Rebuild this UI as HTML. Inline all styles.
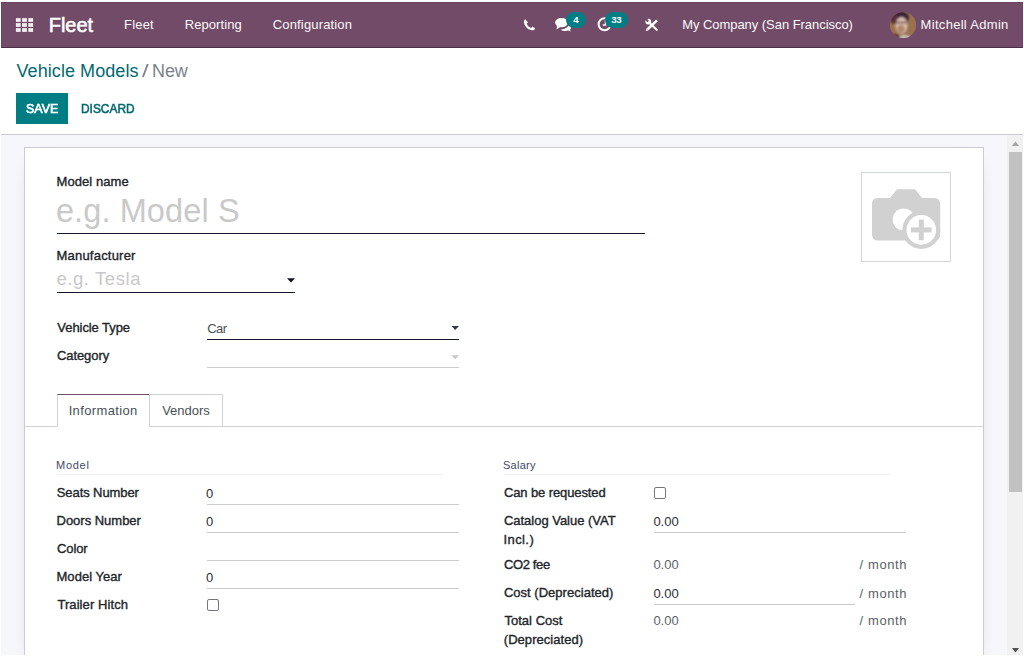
<!DOCTYPE html>
<html lang="en">
<head>
<meta charset="utf-8">
<title>Odoo - Vehicle Models / New</title>
<style>
html,body{margin:0;padding:0;}
body{width:1024px;height:656px;overflow:hidden;background:#fff;position:relative;font-family:"Liberation Sans",sans-serif;}
.abs{position:absolute;}
.t{position:absolute;white-space:nowrap;display:block;}
#nav{left:1px;top:2px;width:1022px;height:46px;background:#714b67;box-sizing:border-box;border-top:1px solid #69435f;border-left:1px solid #69435f;border-right:1px solid #69435f;border-bottom:1px solid #4f2f48;}
#cpline{left:1px;top:134px;width:1022px;height:1px;background:#c9ccd4;}
#bg{left:1px;top:135px;width:1006px;height:520px;background:#f6f7fa;}
#sheet{left:24px;top:147px;width:960px;height:520px;box-sizing:border-box;border:1px solid #c9ccd4;background:#fff;box-shadow:0 5px 20px -15px rgba(0,0,0,0.45);}
#sb{left:1007px;top:135px;width:16px;height:520px;background:#f1f1f1;}
#thumb{left:1009px;top:152px;width:13px;height:340px;background:#c1c1c1;}
#savebtn{left:16px;top:93px;width:52px;height:31px;background:#017e84;}
.ln{position:absolute;height:1px;}
.dk{background:#121629;}
.lt{background:#cccccc;}
.vl{background:#f0f0f0;}
.cb{position:absolute;width:12px;height:12px;box-sizing:border-box;border:1px solid #757588;border-radius:2px;background:#fff;}
.badge{position:absolute;height:16px;border-radius:8px;background:#017e84;}
</style>
</head>
<body>
<div class="abs" id="nav"></div>
<div class="abs" id="cpline"></div>
<div class="abs" id="bg"></div>
<div class="abs" id="sb"></div>
<div class="abs" id="thumb"></div>
<svg class="abs" style="left:1007px;top:135px" width="16" height="520" viewBox="0 0 16 520">
  <polygon points="4.9,11 12.1,11 8.5,6.600" fill="#a3a3a3"/>
  <polygon points="5,513 12,513 8.5,517.5" fill="#505050"/>
</svg>
<div class="abs" id="sheet"></div>
<div class="abs" id="savebtn"></div>

<!-- nav icons -->
<svg class="abs" style="left:0;top:0" width="1024" height="48" viewBox="0 0 1024 48">
  <!-- apps grid -->
  <g fill="#f1edf1">
    <rect x="15.9" y="18.100" width="4.800" height="3.800"/><rect x="22.100" y="18.100" width="4.800" height="3.800"/><rect x="28.300" y="18.100" width="4.800" height="3.800"/>
    <rect x="15.9" y="23.100" width="4.800" height="3.800"/><rect x="22.100" y="23.100" width="4.800" height="3.800"/><rect x="28.300" y="23.100" width="4.800" height="3.800"/>
    <rect x="15.9" y="28.100" width="4.800" height="3.800"/><rect x="22.100" y="28.100" width="4.800" height="3.800"/><rect x="28.300" y="28.100" width="4.800" height="3.800"/>
  </g>
  <!-- phone -->
  <path d="M525.2 19.2 C524 20 523.6 21.5 524 23 C525 27 528.5 30 532 30.2 C533.6 30.3 534.8 29.6 535.2 28.4 L532.6 26.6 L531 28 C529 27.2 527.2 25.2 526.6 23.4 L528 22.2 Z" fill="#ffffff"/>
  <!-- chat -->
  <g fill="#ffffff">
    <ellipse cx="561.5" cy="22.6" rx="6.4" ry="4.7"/>
    <polygon points="557,25.5 556.6,29.4 561,26.6"/>
    <path d="M569.2 23.5 C570.6 24.4 571.4 25.6 571.4 26.8 C571.4 28 570.8 29 569.8 29.8 L571 31.6 L568.2 30.6 C567.4 30.8 566.6 31 565.6 31 C563.6 31 561.8 30.4 560.8 29.4 C565 29.4 568.6 27 569.2 23.5 Z"/>
  </g>
  <!-- clock -->
  <circle cx="604.6" cy="24.3" r="6" fill="none" stroke="#ffffff" stroke-width="2"/>
  <path d="M605.5 20.3 V25 H602.8" fill="none" stroke="#ffffff" stroke-width="1.4"/>
  <!-- tools -->
  <g stroke="#ffffff" fill="none">
    <line x1="647.3" y1="29.5" x2="657" y2="20.3" stroke-width="2.5"/>
    <line x1="649.6" y1="22.9" x2="656.8" y2="29.8" stroke-width="2.1" stroke-linecap="round"/>
  </g>
  <polygon points="645.8,31 646.4,28.6 648.2,30.400" fill="#ffffff"/>
  <circle cx="648.3" cy="21.600" r="2.900" fill="#ffffff"/>
  <rect x="647.2" y="17.6" width="2.200" height="3.800" fill="#714b67" transform="rotate(-42 648.3 21.600)"/>
  <!-- avatar -->
  <defs><clipPath id="av"><circle cx="903" cy="25" r="13.100"/></clipPath>
  <filter id="bl" x="-20%" y="-20%" width="140%" height="140%"><feGaussianBlur stdDeviation="0.9"/></filter></defs>
  <g clip-path="url(#av)">
    <rect x="888" y="10" width="30" height="30" fill="#9a7250"/>
    <g filter="url(#bl)">
      <ellipse cx="900" cy="17.500" rx="9" ry="6.500" fill="#3d2034"/>
      <ellipse cx="894" cy="19" rx="4" ry="5" fill="#5a2e3a"/>
      <ellipse cx="901.500" cy="25.500" rx="6" ry="8.500" fill="#d6bcae"/>
      <ellipse cx="901" cy="29" rx="3.600" ry="4" fill="#b08568"/>
      <rect x="896" y="21.800" width="11" height="1.500" fill="#6a4340"/>
      <ellipse cx="905" cy="38" rx="6" ry="3" fill="#c9c4c4"/>
      <ellipse cx="895" cy="37" rx="5" ry="3" fill="#5a3a3a"/>
    </g>
  </g>
</svg>
<div class="badge" style="left:566px;top:12px;width:20px;"></div>
<div class="badge" style="left:605px;top:12px;width:23px;"></div>

<!-- form lines -->
<div class="ln dk" style="left:57px;top:233px;width:588px;"></div>
<div class="ln dk" style="left:57px;top:292px;width:238px;"></div>
<div class="ln dk" style="left:207px;top:339px;width:252px;"></div>
<div class="ln lt" style="left:207px;top:367px;width:252px;"></div>
<!-- carets -->
<svg class="abs" style="left:0;top:270px" width="1024" height="100" viewBox="0 270 1024 100">
  <polygon points="287,278.2 295,278.2 291,282.4" fill="#111425"/>
  <polygon points="451.5,326 459,326 455.2,330" fill="#343a40"/>
  <polygon points="451.3,355.2 459,355.2 455.2,359.2" fill="#c8c8c8"/>
</svg>

<!-- image placeholder -->
<div class="abs" style="left:861px;top:172px;width:90px;height:90px;box-sizing:border-box;border:1px solid #d3d6de;background:#fff;"></div>
<svg class="abs" style="left:861px;top:172px" width="90" height="90" viewBox="861 172 90 90">
  <path d="M878 198 H890 L897 189.3 H915 L922 198 H934.2 Q940.2 198 940.2 204 V234.5 Q940.2 240.5 934.2 240.5 H878 Q872 240.5 872 234.500 V204 Q872 198 878 198 Z" fill="#d1d1d1"/>
  <circle cx="903.700" cy="219.500" r="11" fill="#fff"/>
  <circle cx="921.300" cy="229.900" r="19" fill="#d1d1d1"/>
  <circle cx="921.300" cy="229.900" r="14.800" fill="#fff"/>
  <rect x="911" y="227.400" width="20.600" height="5" fill="#d1d1d1"/>
  <rect x="918.800" y="219.600" width="5" height="20.600" fill="#d1d1d1"/>
</svg>

<!-- tabs -->
<div class="ln" style="left:25px;top:426px;width:958px;background:#cfd2d8;"></div>
<div class="abs" style="left:57px;top:394px;width:93px;height:33px;box-sizing:border-box;border:1px solid #cfd2d8;border-bottom:1px solid #fff;border-top:1px solid #714b67;background:#fff;"></div>
<div class="abs" style="left:149px;top:394px;width:74px;height:33px;box-sizing:border-box;border:1px solid #cfd2d8;background:#fff;"></div>

<!-- group separators -->
<div class="ln vl" style="left:57px;top:474px;width:386px;"></div>
<div class="ln vl" style="left:504px;top:474px;width:386px;"></div>
<!-- field underlines -->
<div class="ln lt" style="left:207px;top:504px;width:252px;"></div>
<div class="ln lt" style="left:207px;top:532px;width:252px;"></div>
<div class="ln lt" style="left:207px;top:560px;width:252px;"></div>
<div class="ln lt" style="left:207px;top:588px;width:252px;"></div>
<div class="ln lt" style="left:654px;top:532px;width:252px;"></div>
<div class="ln lt" style="left:654px;top:604px;width:201px;"></div>
<!-- checkboxes -->
<div class="cb" style="left:207px;top:599px;"></div>
<div class="cb" style="left:654px;top:487px;"></div>

<span class="t" id="brand" style="left:48.80px;top:15.07px;font-size:20px;line-height:20px;color:#ffffff;letter-spacing:-0.054px;-webkit-text-stroke:0.56px #ffffff;">Fleet</span>
<span class="t" id="m1" style="left:124.07px;top:18.00px;font-size:13px;line-height:13px;color:#fbf9fb;letter-spacing:0.176px;">Fleet</span>
<span class="t" id="m2" style="left:184.71px;top:18.00px;font-size:13px;line-height:13px;color:#fbf9fb;letter-spacing:0.085px;">Reporting</span>
<span class="t" id="m3" style="left:272.74px;top:18.00px;font-size:13px;line-height:13px;color:#fbf9fb;letter-spacing:0.159px;">Configuration</span>
<span class="t" id="co" style="left:682.17px;top:18.00px;font-size:13px;line-height:13px;color:#fbf9fb;letter-spacing:-0.048px;">My Company (San Francisco)</span>
<span class="t" id="us" style="left:920.62px;top:18.00px;font-size:13px;line-height:13px;color:#fbf9fb;letter-spacing:0.298px;">Mitchell Admin</span>
<span class="t" id="b1" style="left:573.24px;top:14.75px;font-size:9.75px;line-height:9.75px;color:#ffffff;letter-spacing:0.000px;font-weight:bold;">4</span>
<span class="t" id="b2" style="left:611.35px;top:14.75px;font-size:9.75px;line-height:9.75px;color:#ffffff;letter-spacing:-0.475px;font-weight:bold;">33</span>
<span class="t" id="bc1" style="left:16.52px;top:61.96px;font-size:18px;line-height:18px;color:#016a70;letter-spacing:0.066px;">Vehicle Models</span>
<span class="t" id="bc2" style="left:142.20px;top:61.96px;font-size:18px;line-height:18px;color:#7c828c;transform-origin:0 0;transform:scaleX(1.3402);">/</span>
<span class="t" id="bc3" style="left:152.12px;top:61.96px;font-size:18px;line-height:18px;color:#7c828c;letter-spacing:-0.163px;">New</span>
<span class="t" id="save" style="left:26.26px;top:102.00px;font-size:13px;line-height:13px;color:#ffffff;transform-origin:0 0;transform:scaleX(0.9559);-webkit-text-stroke:0.70px #ffffff;">SAVE</span>
<span class="t" id="disc" style="left:80.61px;top:102.00px;font-size:13px;line-height:13px;color:#016a70;transform-origin:0 0;transform:scaleX(0.9156);-webkit-text-stroke:0.55px #016a70;">DISCARD</span>
<span class="t" id="l_mn" style="left:56.51px;top:175.00px;font-size:13px;line-height:13px;color:#212529;letter-spacing:0.069px;-webkit-text-stroke:0.36px #212529;">Model name</span>
<span class="t" id="p_mn" style="left:55.91px;top:195.09px;font-size:32.5px;line-height:32.5px;color:#c9c9c9;letter-spacing:0.109px;">e.g. Model S</span>
<span class="t" id="l_mf" style="left:56.51px;top:249.00px;font-size:13px;line-height:13px;color:#212529;letter-spacing:0.211px;-webkit-text-stroke:0.36px #212529;">Manufacturer</span>
<span class="t" id="p_mf" style="left:56.42px;top:270.24px;font-size:18.5px;line-height:18.5px;color:#c9c9c9;letter-spacing:0.575px;">e.g. Tesla</span>
<span class="t" id="l_vt" style="left:57.36px;top:321.00px;font-size:13px;line-height:13px;color:#212529;letter-spacing:-0.071px;-webkit-text-stroke:0.36px #212529;">Vehicle Type</span>
<span class="t" id="v_vt" style="left:207.30px;top:322.00px;font-size:13px;line-height:13px;color:#495057;letter-spacing:-0.582px;">Car</span>
<span class="t" id="l_cat" style="left:56.91px;top:349.00px;font-size:13px;line-height:13px;color:#212529;letter-spacing:-0.068px;-webkit-text-stroke:0.36px #212529;">Category</span>
<span class="t" id="t1" style="left:68.63px;top:404.00px;font-size:13px;line-height:13px;color:#495057;letter-spacing:0.367px;">Information</span>
<span class="t" id="t2" style="left:162.16px;top:404.00px;font-size:13px;line-height:13px;color:#495057;letter-spacing:0.000px;">Vendors</span>
<span class="t" id="s1" style="left:56.01px;top:460.19px;font-size:11px;line-height:11px;color:#434a66;letter-spacing:0.723px;">Model</span>
<span class="t" id="s2" style="left:502.96px;top:460.19px;font-size:11px;line-height:11px;color:#434a66;letter-spacing:0.259px;">Salary</span>
<span class="t" id="l1" style="left:56.74px;top:486.00px;font-size:13px;line-height:13px;color:#212529;letter-spacing:-0.080px;-webkit-text-stroke:0.36px #212529;">Seats Number</span>
<span class="t" id="l2" style="left:56.51px;top:514.00px;font-size:13px;line-height:13px;color:#212529;letter-spacing:-0.010px;-webkit-text-stroke:0.36px #212529;">Doors Number</span>
<span class="t" id="l3" style="left:56.91px;top:542.00px;font-size:13px;line-height:13px;color:#212529;letter-spacing:-0.072px;-webkit-text-stroke:0.36px #212529;">Color</span>
<span class="t" id="l4" style="left:56.51px;top:570.00px;font-size:13px;line-height:13px;color:#212529;letter-spacing:0.040px;-webkit-text-stroke:0.36px #212529;">Model Year</span>
<span class="t" id="l5" style="left:57.38px;top:598.00px;font-size:13px;line-height:13px;color:#212529;letter-spacing:0.085px;-webkit-text-stroke:0.36px #212529;">Trailer Hitch</span>
<span class="t" id="v1" style="left:205.88px;top:487.00px;font-size:13px;line-height:13px;color:#2a2e33;letter-spacing:0.000px;">0</span>
<span class="t" id="v2" style="left:205.88px;top:515.00px;font-size:13px;line-height:13px;color:#2a2e33;letter-spacing:0.000px;">0</span>
<span class="t" id="v4" style="left:205.88px;top:571.00px;font-size:13px;line-height:13px;color:#2a2e33;letter-spacing:0.000px;">0</span>
<span class="t" id="r1" style="left:503.91px;top:486.00px;font-size:13px;line-height:13px;color:#212529;letter-spacing:-0.103px;-webkit-text-stroke:0.36px #212529;">Can be requested</span>
<span class="t" id="r2" style="left:503.91px;top:514.00px;font-size:13px;line-height:13px;color:#212529;letter-spacing:-0.015px;-webkit-text-stroke:0.36px #212529;">Catalog Value (VAT</span>
<span class="t" id="r2b" style="left:503.49px;top:533.00px;font-size:13px;line-height:13px;color:#212529;letter-spacing:0.413px;-webkit-text-stroke:0.36px #212529;">Incl.)</span>
<span class="t" id="r3" style="left:503.91px;top:558.00px;font-size:13px;line-height:13px;color:#212529;letter-spacing:-0.359px;-webkit-text-stroke:0.36px #212529;">CO2 fee</span>
<span class="t" id="r4" style="left:503.91px;top:586.00px;font-size:13px;line-height:13px;color:#212529;letter-spacing:0.020px;-webkit-text-stroke:0.36px #212529;">Cost (Depreciated)</span>
<span class="t" id="r5" style="left:504.38px;top:614.00px;font-size:13px;line-height:13px;color:#212529;letter-spacing:0.031px;-webkit-text-stroke:0.36px #212529;">Total Cost</span>
<span class="t" id="r5b" style="left:503.77px;top:633.00px;font-size:13px;line-height:13px;color:#212529;letter-spacing:0.053px;-webkit-text-stroke:0.36px #212529;">(Depreciated)</span>
<span class="t" id="w2" style="left:653.43px;top:515.00px;font-size:13px;line-height:13px;color:#2a2e33;letter-spacing:-0.029px;">0.00</span>
<span class="t" id="w3" style="left:653.43px;top:558.00px;font-size:13px;line-height:13px;color:#5c636a;letter-spacing:-0.029px;">0.00</span>
<span class="t" id="w4" style="left:653.43px;top:587.00px;font-size:13px;line-height:13px;color:#2a2e33;letter-spacing:-0.029px;">0.00</span>
<span class="t" id="w5" style="left:653.43px;top:614.00px;font-size:13px;line-height:13px;color:#5c636a;letter-spacing:-0.029px;">0.00</span>
<span class="t" id="mo1" style="left:859.51px;top:558.00px;font-size:13px;line-height:13px;color:#5a6168;letter-spacing:0.609px;">/ month</span>
<span class="t" id="mo2" style="left:859.51px;top:587.00px;font-size:13px;line-height:13px;color:#5a6168;letter-spacing:0.609px;">/ month</span>
<span class="t" id="mo3" style="left:859.51px;top:614.00px;font-size:13px;line-height:13px;color:#5a6168;letter-spacing:0.609px;">/ month</span>
<div class="abs" style="left:0;top:655px;width:1024px;height:1px;background:#fff;"></div>
</body>
</html>
